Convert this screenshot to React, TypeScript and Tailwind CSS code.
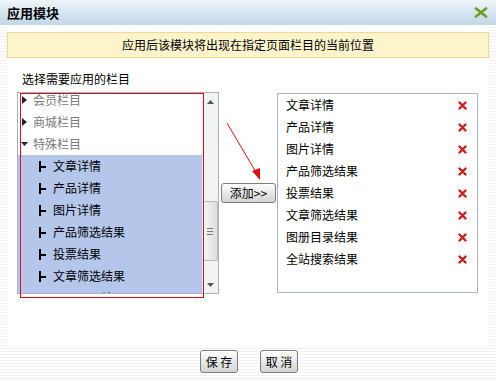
import React from "react";

const Tri = ({ down }: { down?: boolean }) =>
  down ? (
    <svg width="8" height="6" viewBox="0 0 8 6" className="mr-[4px] ml-[1px]">
      <polygon points="0,1 7,1 3.5,5" fill="#222" />
    </svg>
  ) : (
    <svg width="8" height="10" viewBox="0 0 8 10" className="mr-[4px] ml-[1px]">
      <polygon points="1,1 6,5 1,9" fill="#222" />
    </svg>
  );

const Branch = () => (
  <div className="relative w-[7px] h-[11px] mr-[7px] ml-[1px]">
    <div className="absolute left-0 top-0 w-[2px] h-[11px] bg-black" />
    <div className="absolute left-0 top-[5px] w-[7px] h-[2px] bg-black" />
  </div>
);

const RedX = () => (
  <svg width="9" height="9" viewBox="0 0 9 9">
    <path d="M1.5 1.5 L7.5 7.5 M7.5 1.5 L1.5 7.5" stroke="#d01a1a" strokeWidth="2.4" strokeLinecap="round" />
  </svg>
);

const btn =
  "border border-[#7d7d7d] rounded-[3px] bg-[linear-gradient(to_bottom,#ffffff,#e4e4e4_60%,#d4d4d4)] text-[12px] text-black flex items-center justify-center";

export default function App() {
  const sub = ["文章详情", "产品详情", "图片详情", "产品筛选结果", "投票结果", "文章筛选结果", "图册目录结果"];
  const right = ["文章详情", "产品详情", "图片详情", "产品筛选结果", "投票结果", "文章筛选结果", "图册目录结果", "全站搜索结果"];
  return (
    <div
      className="w-[496px] h-[381px] flex flex-col overflow-hidden bg-[repeating-linear-gradient(to_bottom,#f1f1f1_0px,#f1f1f1_1px,#ffffff_1px,#ffffff_3px)] text-black"
      style={{ fontFamily: "'Noto Sans CJK SC', 'Noto Sans', sans-serif" }}
    >
      {/* title bar */}
      <div className="h-[25px] shrink-0 flex items-center justify-between pl-[7px] pr-[8px] bg-[linear-gradient(to_bottom,#f0f5f9,#d6e5f0_50%,#c2d7e6)]">
        <span className="text-[13px] font-bold leading-none">应用模块</span>
        <svg width="14" height="11" viewBox="0 0 14 11">
          <path d="M2 1.5 L12 9.5 M12 1.5 L2 9.5" stroke="#6e9c22" strokeWidth="2.6" strokeLinecap="round" />
        </svg>
      </div>

      {/* body */}
      <div className="mx-[7px] h-[321px] shrink-0 bg-white flex flex-col">
        <div className="mt-[7px] h-[26px] border border-[#efd995] bg-[#fdf4cb] flex items-center justify-center text-[12px]">
          应用后该模块将出现在指定页面栏目的当前位置
        </div>
        <div className="mt-[13px] h-[16px] pl-[15px] text-[12px] leading-[16px]">选择需要应用的栏目</div>

        <div className="relative mt-[5px] flex pl-[10px]">
          {/* left list */}
          <div className="w-[202px] h-[202px] border border-[#a9b1ba] flex bg-white">
            <div className="flex-1 overflow-hidden">
              <div className="mt-[-4px] text-[12px]">
                <div className="h-[22px] flex items-center pl-[2px] text-[#7a7a7a]">
                  <Tri />会员栏目
                </div>
                <div className="h-[22px] flex items-center pl-[2px] text-[#7a7a7a]">
                  <Tri />商城栏目
                </div>
                <div className="h-[22px] flex items-center pl-[2px] text-[#7a7a7a]">
                  <Tri down />特殊栏目
                </div>
                <div className="bg-[#b4c6ea]">
                  {sub.map((s) => (
                    <div key={s} className="h-[22px] flex items-center pl-[20px]">
                      <Branch />
                      {s}
                    </div>
                  ))}
                </div>
              </div>
            </div>
            {/* scrollbar */}
            <div className="w-[16px] bg-[#f3f3f3] flex flex-col items-center">
              <div className="h-[17px] flex items-center justify-center">
                <svg width="7" height="4" viewBox="0 0 7 4"><polygon points="0,4 7,4 3.5,0" fill="#555" /></svg>
              </div>
              <div className="mt-[91px] w-[15px] h-[60px] border border-[#b9b9b9] rounded-[2px] bg-[linear-gradient(to_right,#f4f4f4,#dedede)] flex flex-col items-center justify-center gap-[2px]">
                <div className="w-[6px] h-px bg-[#777]" />
                <div className="w-[6px] h-px bg-[#777]" />
                <div className="w-[6px] h-px bg-[#777]" />
              </div>
              <div className="flex-1" />
              <div className="h-[17px] flex items-center justify-center">
                <svg width="7" height="4" viewBox="0 0 7 4"><polygon points="0,0 7,0 3.5,4" fill="#555" /></svg>
              </div>
            </div>
          </div>

          {/* middle */}
          <div className="w-[58px] pl-[2px]">
            <div className={`${btn} mt-[91px] w-[55px] h-[20px]`}>添加&gt;&gt;</div>
          </div>

          {/* right list */}
          <div className="mt-[1px] w-[201px] h-[200px] border border-[#a9b1ba] bg-white text-[12px]">
            {right.map((r) => (
              <div key={r} className="h-[22px] flex items-center justify-between pl-[8px] pr-[10px]">
                <span>{r}</span>
                <RedX />
              </div>
            ))}
          </div>

          {/* annotation red box */}
          <div className="absolute left-[13px] top-[1px] w-[184px] h-[205px] border border-[#d0101a] pointer-events-none" />
          {/* annotation arrow */}
          <svg className="absolute left-[214px] top-[25px] pointer-events-none" width="50" height="70" viewBox="0 0 50 70">
            <line x1="6" y1="6" x2="36" y2="57" stroke="#e01010" strokeWidth="1" />
            <polygon points="39,63 31,54 39,51" fill="#e01010" />
          </svg>
        </div>
      </div>

      {/* footer */}
      <div className="h-[35px] flex pt-[4px] pl-[200px] gap-[22px]">
        <div className={`${btn} w-[38px] h-[23px]`}>保 存</div>
        <div className={`${btn} w-[38px] h-[23px]`}>取 消</div>
      </div>
    </div>
  );
}
